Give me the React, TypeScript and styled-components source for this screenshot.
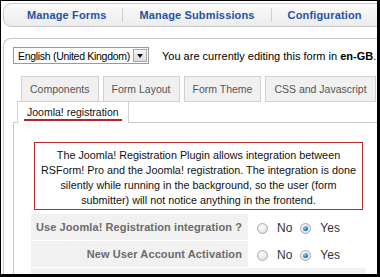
import { createGlobalStyle, styled } from "styled-components";

const GlobalStyle = createGlobalStyle`
  html, body {
    margin: 0;
    padding: 0;
    background: #fff;
  }
  body {
    font-family: "Liberation Sans", Arial, sans-serif;
  }
`;

const Frame = styled.div`
  width: 380px;
  height: 277px;
  box-sizing: border-box;
  border-style: solid;
  border-color: #000;
  border-width: 1px 3px 3px 1px;
  padding: 2px 0 0 2px;
  overflow: hidden;
  display: flex;
  flex-direction: column;
  background: #fff;
`;

const Nav = styled.nav`
  width: 400px;
  height: 24px;
  box-sizing: border-box;
  flex: none;
  border: 1px solid #c9c9c9;
  border-radius: 8px;
  background: linear-gradient(#fbfbfb, #ececec);
  display: flex;
  align-items: center;
  gap: 16px;
  padding-left: 23px;
`;

const NavLink = styled.a`
  font-size: 11px;
  font-weight: bold;
  letter-spacing: 0.15px;
  color: #1f53a3;
  text-decoration: none;
  white-space: nowrap;
`;

const NavSep = styled.span`
  width: 1px;
  height: 14px;
  background: #cfcfcf;
`;

const Main = styled.div`
  margin-top: 11px;
  width: 400px;
  flex: 1;
  border-left: 1px solid #c9c9c9;
  border-top: 1px solid #c9c9c9;
  border-top-left-radius: 8px;
  padding: 8px 0 0 9px;
  display: flex;
  flex-direction: column;
`;

const LangRow = styled.div`
  display: flex;
  align-items: center;
  height: 17px;
  font-size: 11px;
  color: #000;
  white-space: nowrap;
`;

const Select = styled.div`
  width: 136px;
  height: 17px;
  box-sizing: border-box;
  border: 1px solid #9a9a9a;
  display: flex;
  align-items: center;
  justify-content: space-between;
  padding-left: 4px;
  font-size: 10.5px;
  letter-spacing: -0.3px;
  background: #fff;
`;

const SelectButton = styled.span`
  width: 14px;
  height: 13px;
  margin-right: 1px;
  box-sizing: border-box;
  border: 1px solid #a8a8a8;
  background: linear-gradient(#f6f6f6, #dcdcdc);
  display: flex;
  align-items: center;
  justify-content: center;

  &::after {
    content: "";
    border-left: 3px solid transparent;
    border-right: 3px solid transparent;
    border-top: 4px solid #111;
  }
`;

const EditNote = styled.span`
  margin-left: 13px;
`;

const TabRow = styled.div`
  display: flex;
  gap: 4px;
  margin-top: 12px;
  padding-left: 8px;
`;

const Tab = styled.div`
  height: 26px;
  box-sizing: border-box;
  border: 1px solid #d2d2d2;
  background: #f0f0f0;
  color: #555;
  font-size: 10.5px;
  padding: 0 8px;
  display: flex;
  align-items: center;
  white-space: nowrap;
`;

const ActiveTab = styled.div`
  align-self: flex-start;
  margin: -1px 0 -1px 4px;
  height: 22px;
  box-sizing: border-box;
  border: 1px solid #d2d2d2;
  border-bottom: none;
  background: #fff;
  padding: 3px 6px 0;
  display: flex;
  align-items: flex-start;
  position: relative;
  z-index: 1;
`;

const ActiveLabel = styled.span`
  font-size: 10.5px;
  line-height: 14px;
  color: #111;
  padding: 0 3px 0;
  border-bottom: 2px solid #b3242a;
  white-space: nowrap;
`;

const Panel = styled.div`
  flex: 1;
  border-left: 1px solid #c9c9c9;
  border-top: 1px solid #c9c9c9;
  padding: 19px 0 0 17px;
  display: flex;
  flex-direction: column;
`;

const Notice = styled.div`
  width: 329px;
  box-sizing: border-box;
  margin-left: 3px;
  border: 1px solid #b52a2a;
  padding: 5px 2px 1px;
  font-size: 10.8px;
  line-height: 15px;
  color: #111;
  text-align: center;
  white-space: nowrap;
`;

const Options = styled.div`
  margin-top: 4px;
  width: 335px;
  display: grid;
  grid-template-columns: 217px 1fr;
  grid-auto-rows: 26px;
  row-gap: 1px;
`;

const Label = styled.div`
  background: #f1f1f1;
  color: #6b6b6b;
  font-size: 11px;
  font-weight: bold;
  letter-spacing: 0.1px;
  display: flex;
  align-items: center;
  justify-content: flex-end;
  padding-right: 6px;
  white-space: nowrap;
`;

const Value = styled.div`
  display: flex;
  align-items: center;
  padding: 2px 0 0 9px;
  font-size: 12px;
  color: #333;
`;

const Spacer = styled.div`
  grid-column: 1 / span 2;
  background: #f1f1f1;
`;

const RadioLabel = styled.label`
  display: flex;
  align-items: center;
  gap: 9px;
  margin-right: 8px;
`;

const RadioDot = styled.span<{ $checked?: boolean }>`
  width: 11px;
  height: 11px;
  box-sizing: border-box;
  border-radius: 50%;
  border: 1px solid #a9a9a9;
  background: radial-gradient(circle at 40% 35%, #ffffff, #d8d8d8);
  display: flex;
  align-items: center;
  justify-content: center;

  &::after {
    content: "";
    display: ${(p) => (p.$checked ? "block" : "none")};
    width: 5px;
    height: 5px;
    border-radius: 50%;
    background: radial-gradient(circle at 35% 30%, #8fd0f5, #1c6aa8 70%);
  }
`;

function YesNo({ value }: { value: boolean }) {
  return (
    <Value>
      <RadioLabel>
        <RadioDot $checked={!value} />
        No
      </RadioLabel>
      <RadioLabel>
        <RadioDot $checked={value} />
        Yes
      </RadioLabel>
    </Value>
  );
}

export default function App() {
  const tabs = ["Components", "Form Layout", "Form Theme", "CSS and Javascript"];

  return (
    <>
      <GlobalStyle />
      <Frame>
        <Nav>
          <NavLink>Manage Forms</NavLink>
          <NavSep />
          <NavLink>Manage Submissions</NavLink>
          <NavSep />
          <NavLink>Configuration</NavLink>
        </Nav>

        <Main>
          <LangRow>
            <Select>
              English (United Kingdom)
              <SelectButton />
            </Select>
            <EditNote>
              You are currently editing this form in <b>en-GB</b>.
            </EditNote>
          </LangRow>

          <TabRow>
            {tabs.map((t) => (
              <Tab key={t}>{t}</Tab>
            ))}
          </TabRow>
          <ActiveTab>
            <ActiveLabel>Joomla! registration</ActiveLabel>
          </ActiveTab>

          <Panel>
            <Notice>
              The Joomla! Registration Plugin allows integration between
              <br />
              RSForm! Pro and the Joomla! registration. The integration is done
              <br />
              silently while running in the background, so the user (form
              <br />
              submitter) will not notice anything in the frontend.
            </Notice>

            <Options>
              <Label>Use Joomla! Registration integration ?</Label>
              <YesNo value={true} />
              <Label>New User Account Activation</Label>
              <YesNo value={true} />
              <Spacer />
            </Options>
          </Panel>
        </Main>
      </Frame>
    </>
  );
}
